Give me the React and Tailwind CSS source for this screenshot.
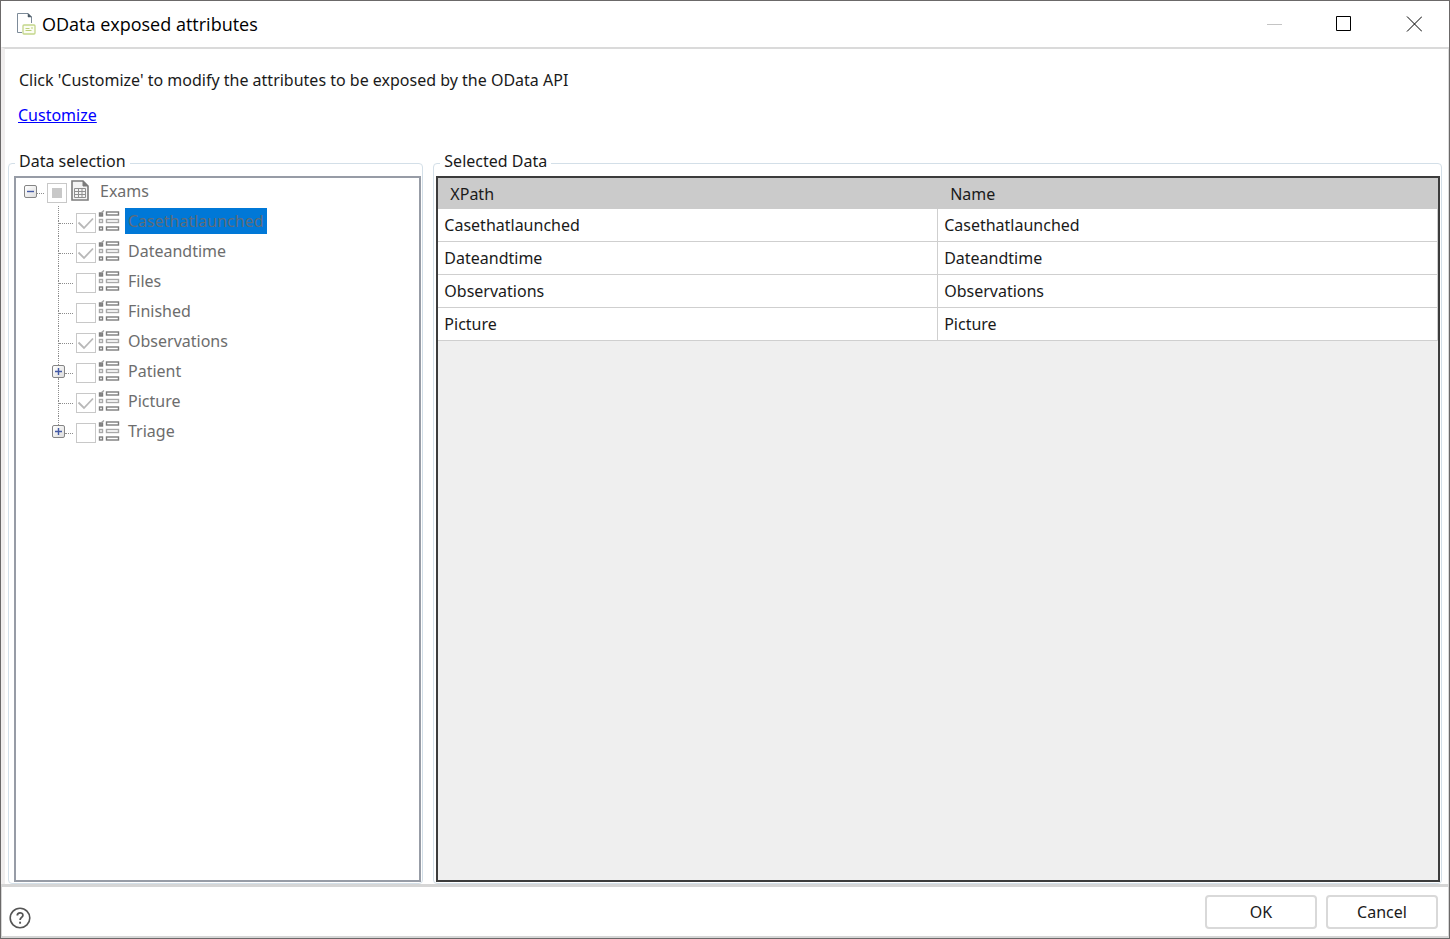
const attributes = [
  { name: "Casethatlaunched", checked: true, selected: true },
  { name: "Dateandtime", checked: true },
  { name: "Files" },
  { name: "Finished" },
  { name: "Observations", checked: true },
  { name: "Patient", expandable: true },
  { name: "Picture", checked: true },
  { name: "Triage", expandable: true },
];

const selectedData = attributes.filter((a) => a.checked);

function AppIcon() {
  return (
    <svg className="h-6 w-5 shrink-0" viewBox="0 0 20 24" fill="none">
      <path d="M6 20.5H1.5V1.5H12l3.500 3.500V11" stroke="#7d8b99" />
      <path d="M12 1.500V5h3.500z" fill="#4b5966" stroke="#4b5966" strokeWidth="0.500" />
      <rect x="7" y="13" width="12" height="9" rx="1" fill="#fbfdf3" stroke="#c3d68a" strokeWidth="1.300" />
      <path d="M9.500 16.500h4M9.500 18.500h6M15 16h2" stroke="#bdd17c" />
    </svg>
  );
}

function TableIcon() {
  return (
    <svg className="h-6 w-5 shrink-0" viewBox="0 0 20 24" fill="none" stroke="#7c7c7c">
      <path d="M2 2h11l5 5v14H2z" fill="#f4f4f4" strokeWidth="1.600" />
      <path d="M13 2v5h5z" fill="#7c7c7c" />
      <path d="M4.500 9.500h11v9h-11zM4.500 12.500h11M4.500 15.500h11M8.500 9.500v9M12 9.500v9" stroke="#8f8f8f" />
    </svg>
  );
}

function ListIcon() {
  return (
    <svg className="h-6 w-6 shrink-0" viewBox="0 0 24 24" fill="none" strokeWidth="1.400">
      <rect x="2.500" y="4" width="3" height="3" fill="#8a8a8a" stroke="#7c7c7c" />
      <path d="M4 4l3-2.500" stroke="#a0a0a0" />
      <rect x="9.500" y="3" width="12" height="3" stroke="#7c7c7c" />
      <rect x="2.500" y="10.500" width="3" height="3" stroke="#a8a8a8" />
      <rect x="9.500" y="10.500" width="12" height="3" stroke="#a8a8a8" />
      <rect x="2.500" y="18" width="3" height="3" stroke="#7c7c7c" />
      <rect x="9.500" y="18" width="12" height="3" stroke="#7c7c7c" />
    </svg>
  );
}

function Expander({ open, label }) {
  return (
    <button
      type="button"
      aria-label={label}
      className="flex size-[13px] shrink-0 items-center justify-center rounded-xs border border-[#858585] bg-gradient-to-br from-white to-[#dedede]"
    >
      <svg className="size-[9px]" viewBox="0 0 9 9" stroke="#4359a5" strokeWidth="1.400">
        <path d={open ? "M1 4.500h7" : "M1 4.500h7M4.500 1v7"} />
      </svg>
    </button>
  );
}

function Checkbox({ id, checked, partial }) {
  return (
    <span className="relative mt-1 size-5 shrink-0">
      <input
        id={id}
        type="checkbox"
        defaultChecked={checked}
        disabled
        className="block size-5 appearance-none border border-[#c8c8c8] bg-white"
      />
      {checked && (
        <svg className="absolute inset-0 size-5" viewBox="0 0 20 20" fill="none" stroke="#b8b8b8" strokeWidth="1.800">
          <path d="M2.500 9.500l5.500 5.500 9-9.500" />
        </svg>
      )}
      {partial && <span className="absolute inset-1 m-px bg-[#c8c8c8]" />}
    </span>
  );
}

function TreeItem({ item, last }) {
  const id = `attr-${item.name}`;
  return (
    <li className="flex h-[30px] items-center">
      <div className="flex w-[13px] shrink-0 flex-col items-center self-stretch">
        <span className="w-px flex-1 border-l border-dotted border-[#8c8c8c]" />
        {item.expandable && <Expander label={`Expand ${item.name}`} />}
        <span className={last ? "flex-1" : "w-px flex-1 border-l border-dotted border-[#8c8c8c]"} />
      </div>
      <span
        className={
          item.expandable
            ? "mt-1 mr-[3px] w-2 border-t border-dotted border-[#8c8c8c]"
            : "mt-1 mr-[3px] -ml-1.5 w-3.5 border-t border-dotted border-[#8c8c8c]"
        }
      />
      <Checkbox id={id} checked={item.checked} />
      <div className="ml-px">
        <ListIcon />
      </div>
      <label
        htmlFor={id}
        className={
          item.selected
            ? "ml-1 bg-[#0078d7] px-[3px] leading-[26px] text-[#5f6c7a]"
            : "ml-1 px-[3px] leading-[26px] text-[#6d6d6d]"
        }
      >
        {item.name}
      </label>
    </li>
  );
}

function Group({ title, children }) {
  return (
    <fieldset className="flex min-h-0 min-w-0 flex-col rounded border border-[#d3dfe8] pt-px pr-px pb-px pl-0.5">
      <legend className="ml-1 px-1 pb-1 leading-5">{title}</legend>
      {children}
    </fieldset>
  );
}

export default function App() {
  return (
    <div className="flex h-screen flex-col border border-[#6b6969] bg-white font-['Noto_Sans','Open_Sans',sans-serif] text-[16px] text-[#1a1a1a]">
      <header className="flex h-[46px] shrink-0 items-center pl-[15px]">
        <AppIcon />
        <h1 className="ml-1.5 font-['Open_Sans','Noto_Sans',sans-serif] text-[18px] text-black">OData exposed attributes</h1>
        <div className="ml-auto flex self-stretch">
          <button type="button" aria-label="Minimize" disabled className="flex w-[70px] items-center justify-center">
            <svg className="size-4" viewBox="0 0 16 16" stroke="#c4c4c4">
              <path d="M1 8.500h15" />
            </svg>
          </button>
          <button type="button" aria-label="Maximize" className="flex w-[70px] items-center justify-center">
            <svg className="size-4" viewBox="0 0 16 16" fill="none" stroke="#000">
              <path d="M0.500 0.500h14v14h-14z" />
            </svg>
          </button>
          <button type="button" aria-label="Close" className="flex w-[70px] items-center justify-center">
            <svg className="size-4" viewBox="0 0 16 16" stroke="#000">
              <path d="M1 0.500l15 15M16 0.500l-15 15" />
            </svg>
          </button>
        </div>
      </header>

      <main className="flex min-h-0 flex-1 flex-col border-t-2 border-r border-l-4 border-t-[#dadada] border-r-[#dcdcdc] border-l-[#f0eeee] pr-[6px] pl-[3px]">
        <p className="mt-[19px] ml-[11px] leading-6">Click &apos;Customize&apos; to modify the attributes to be exposed by the OData API</p>
        <a href="#customize" className="mt-[11px] ml-[10px] self-start leading-6 text-[#0000ff] underline">
          Customize
        </a>

        <div className="mt-6 grid min-h-0 flex-1 grid-cols-[minmax(0,7fr)_minmax(0,17fr)] gap-[10px]">
          <Group title="Data selection">
            <ul className="ml-[3px] min-h-0 flex-1 overflow-auto border-2 border-[#979ca6] pl-2">
              <li>
                <div className="mb-0.5 flex h-[26px] items-center">
                  <Expander open label="Collapse Exams" />
                  <span className="mt-1 mr-[3px] w-[7px] border-t border-dotted border-[#8c8c8c]" />
                  <Checkbox id="entity-exams" partial />
                  <div className="ml-[3px]">
                    <TableIcon />
                  </div>
                  <label htmlFor="entity-exams" className="ml-[7px] px-[3px] text-[#6d6d6d]">
                    Exams
                  </label>
                </div>
                <ul className="pl-7">
                  {attributes.map((item, i) => (
                    <TreeItem key={item.name} item={item} last={i === attributes.length - 1} />
                  ))}
                </ul>
              </li>
            </ul>
          </Group>

          <Group title="Selected Data">
            <div className="min-h-0 flex-1 overflow-auto border-2 border-[#3c3c3c] bg-[#efefef]">
              <table className="w-full table-fixed border-separate border-spacing-0 text-left">
                <thead>
                  <tr className="h-[31px] bg-[#cbcbcb]">
                    <th className="px-3 font-normal">XPath</th>
                    <th className="px-3 font-normal">Name</th>
                  </tr>
                </thead>
                <tbody>
                  {selectedData.map(({ name }) => (
                    <tr key={name} className="h-[33px] bg-white">
                      <td className="border-r border-b border-[#cfcfcf] px-1.5">{name}</td>
                      <td className="border-r border-b border-[#cfcfcf] px-1.5">{name}</td>
                    </tr>
                  ))}
                </tbody>
              </table>
            </div>
          </Group>
        </div>
      </main>

      <footer className="flex shrink-0 items-end border-x border-t-[3px] border-b-2 border-[#d6d6d6] pt-2 pr-[10px] pb-[7px] pl-[7px]">
        <button type="button" aria-label="Help">
          <svg className="size-[22px]" viewBox="0 0 22 22" fill="none" stroke="#555">
            <circle cx="11" cy="11" r="9.800" strokeWidth="1.600" />
            <path d="M8.300 8.500c0-3.600 5.600-3.500 5.600-.3 0 2.300-2.800 2.200-2.800 4.800" strokeWidth="1.800" />
            <path d="M11.100 14.700v2" strokeWidth="1.900" />
          </svg>
        </button>
        <div className="ml-auto flex gap-[9px]">
          <button type="button" className="h-[34px] w-28 rounded border-2 border-[#d9d9d9] bg-white">
            OK
          </button>
          <button type="button" className="h-[34px] w-28 rounded border-2 border-[#d9d9d9] bg-white">
            Cancel
          </button>
        </div>
      </footer>
    </div>
  );
}
